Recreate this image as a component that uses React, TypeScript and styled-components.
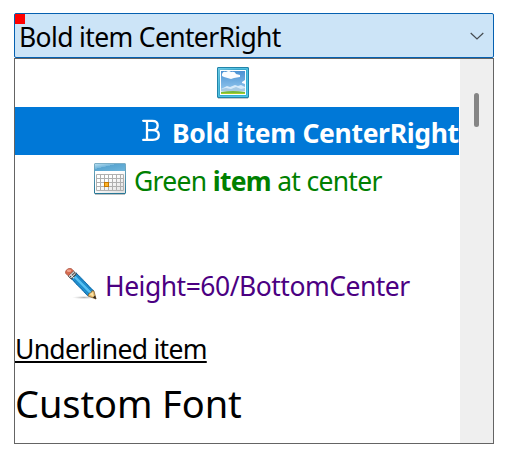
import React from "react";
import styled, { createGlobalStyle } from "styled-components";

const GlobalStyle = createGlobalStyle`
  * { box-sizing: border-box; }
  body { margin: 0; background: #fff; font-family: "Noto Sans", "Open Sans", sans-serif; }
`;

const Page = styled.main`
  width: 514px;
  height: 464px;
  padding: 13px 0 0 14px;
  overflow: hidden;
`;

const Combo = styled.div`
  position: relative;
  display: flex;
  justify-content: space-between;
  width: 480px;
  height: 45px;
  padding: 5px 9px 0 4px;
  border: 1px solid #0560b0;
  border-radius: 2px;
  background: #cce4f7;
`;

const Marker = styled.span`
  position: absolute;
  left: 0;
  top: 0;
  width: 10px;
  height: 10px;
  background: #f00;
`;

const Label = styled.span<{ $spacing: number; $bold?: boolean; $underline?: boolean; $size?: number }>`
  display: block;
  font-size: ${p => p.$size ?? 26.5}px;
  line-height: ${p => (p.$size ? 54 : 36)}px;
  font-weight: ${p => (p.$bold ? 700 : 400)};
  letter-spacing: ${p => p.$spacing}px;
  white-space: pre;
  text-decoration: ${p => (p.$underline ? "underline 2px" : "none")};
  text-underline-offset: 2px;
  text-decoration-skip-ink: none;
`;

const Chevron = styled.svg`
  width: 14px;
  height: 8px;
  margin-top: 13px;
`;

const Dropdown = styled.div`
  display: flex;
  width: 480px;
  height: 386px;
  border: 1px solid #646464;
`;

const Options = styled.div`
  width: 444px;
`;

const Row = styled.div<{ $height?: number; $top?: number; $left?: number; $gap?: number; $selected?: boolean; $color?: string }>`
  display: flex;
  align-items: flex-start;
  gap: ${p => p.$gap ?? 8}px;
  height: ${p => p.$height ?? 48}px;
  padding: ${p => p.$top ?? 8}px 0 0 ${p => p.$left ?? 0}px;
  color: ${p => p.$color ?? "#000"};
  background: ${p => (p.$selected ? "#0078d7" : "transparent")};
`;

const Icon = styled.svg`
  display: block;
  flex: none;
  width: 32px;
  height: 32px;
`;

const Scrollbar = styled.div`
  width: 33px;
  margin-left: 1px;
  padding: 34px 0 0 14px;
  background: #efefef;
`;

const Thumb = styled.div`
  width: 5px;
  height: 34px;
  border-radius: 2.5px;
  background: #858585;
`;

const PictureIcon = () => (
  <Icon viewBox="0 0 32 32">
    <defs>
      <linearGradient id="frame" x2="1" y2="1">
        <stop stopColor="#78bad2" /><stop offset=".35" stopColor="#2992b9" /><stop offset="1" stopColor="#20a8d1" />
      </linearGradient>
      <linearGradient id="sky" x2="0" y2="1">
        <stop stopColor="#4b91d3" /><stop offset="1" stopColor="#9fd0f2" />
      </linearGradient>
    </defs>
    <path d="M1 31.3h30" stroke="#b8bdc0" />
    <rect x=".5" y=".5" width="31" height="30" rx=".5" fill="url(#frame)" stroke="#2184aa" />
    <rect x="1.8" y="1.8" width="28.4" height="27.4" fill="none" stroke="#64d3f0" />
    <path d="M3 3h26v25H3z" fill="#fff" />
    <path d="M4 4h24v23H4z" fill="url(#sky)" />
    <path d="M5 7q1-3 4-2 3-2 5 0 4-1 5 2l4 1v2l-6 1-3 1-7-2-2-1zM25 15l3-2v4l-3-1z" fill="#fbfcff" />
    <path d="M4 22l6-3 3 1 5-2 3 1 3-1 4 2v5H4z" fill="#d7eafa" />
    <path d="M4 22l5-1 5 1 5-2 5 2 4-1v3H4z" fill="#a7cae4" />
    <path d="M4 25q12-2 24 0v2H4z" fill="#77b83b" />
    <path d="M4 26.5h24" stroke="#a9ce28" />
  </Icon>
);

const BoldIcon = () => (
  <Icon viewBox="0 0 32 32">
    <path d="M8.2 5.8h9q5.5 0 5.5 4.6 0 4.7-5.5 4.7H12h5.8q6 0 6 5 0 4.8-6 4.8H8.2M12 5.8v19" fill="none" stroke="#fff" strokeWidth="2.3" strokeLinejoin="round" strokeLinecap="round" />
  </Icon>
);

const CalendarIcon = () => (
  <Icon viewBox="0 0 32 32">
    <defs>
      <linearGradient id="header" x2="1" y2="1">
        <stop stopColor="#b4dcef" /><stop offset=".35" stopColor="#75b7dc" /><stop offset=".36" stopColor="#5aa5d0" /><stop offset="1" stopColor="#6eb5db" />
      </linearGradient>
      <linearGradient id="paper" x1=".6" y1=".4" x2="1" y2="1">
        <stop stopColor="#fff" /><stop offset="1" stopColor="#ddd" />
      </linearGradient>
      <linearGradient id="case" x2="0" y2="1"><stop stopColor="#7caec5" /><stop offset="1" stopColor="#267795" /></linearGradient>
    </defs>
    <path d="M1 31.4h30" stroke="#b7babc" />
    <rect x=".5" y=".5" width="31" height="30" rx=".5" fill="url(#paper)" stroke="url(#case)" />
    <path d="M1 1h30v7H1z" fill="url(#header)" />
    <path d="M2.5 11.5h27v16h-27zM2.5 15.5h27M2.5 19.5h27M2.5 23.5h27M6.5 11v17M10.5 11v17M14.5 11v17M18.5 11v17M22.5 11v17M26.5 11v17" fill="none" stroke="#b0b0b0" />
    <rect x="10.5" y="19.5" width="4" height="4" fill="#fdb52b" stroke="#c87800" />
  </Icon>
);

const PencilIcon = () => (
  <Icon viewBox="0 0 32 32">
    <defs>
      <radialGradient id="shade"><stop stopColor="#777" stopOpacity=".55" /><stop offset="1" stopColor="#aaa" stopOpacity="0" /></radialGradient>
    </defs>
    <ellipse cx="19" cy="29.5" rx="12" ry="1.6" fill="url(#shade)" />
    <path d="M5.2 9.8l5.8-5.4L28.8 22.8l-1.2 2.4-3.2.8-1.2 2.6z" fill="#2195d5" />
    <path d="M5.8 10L23 27.8M11 5L28.5 23" stroke="#12629f" strokeWidth="1.1" strokeDasharray="1.1 .5" />
    <path d="M8.4 7.4l17.8 18" stroke="#55c0f2" strokeWidth="2.4" />
    <path d="M7.2 8.8l17 17.4M9.8 6.2l17.4 17.8" stroke="#166eae" strokeWidth=".7" strokeDasharray="1 .6" />
    <path d="M23 28l1.2-2.8 2-.4.7-2 2.1.2 2 8z" fill="#e8bd6b" stroke="#765223" strokeWidth=".7" />
    <path d="M24.5 26.2l4.5 2.8-1.5-5" fill="#f9e1a7" />
    <path d="M27.7 29.6l2.4-2.2 1.2 3.7z" fill="#30261b" />
    <path d="M3 8l5.5-5.1 3 3.2-5.3 5z" fill="#c9c9c9" stroke="#333" strokeWidth=".7" />
    <path d="M4.6 9.5L10 4.5M6.2 11l5-4.8" stroke="#343434" />
    <path d="M5.7 7l3.4 3.4" stroke="#fff" />
    <path d="M.7 5.6Q-.3 3.6 1.6 1.8 3.6-.1 6.2.5l2.4 2.2L3.2 7.8z" fill="#d46b50" stroke="#a45343" strokeWidth=".6" />
    <ellipse cx="4" cy="2.8" rx="2.2" ry="1.3" fill="#efa38e" />
  </Icon>
);

export default function App() {
  return (
    <Page>
      <GlobalStyle />
      <Combo>
        <Marker />
        <Label $spacing={-0.65}>Bold item CenterRight</Label>
        <Chevron viewBox="0 0 14 8"><path d="M.7 1L7 7l6.3-6" fill="none" stroke="#454b50" strokeWidth="1.2" /></Chevron>
      </Combo>
      <Dropdown>
        <Options>
          <Row $left={202}><PictureIcon /></Row>
          <Row $left={120} $gap={5} $selected $color="#fff">
            <BoldIcon /><Label $spacing={-0.33} $bold>Bold item CenterRight</Label>
          </Row>
          <Row $left={79} $color="#008000">
            <CalendarIcon /><Label $spacing={-0.7}>Green <b>item</b> at center</Label>
          </Row>
          <Row $height={120} $top={65} $left={50} $color="#4b0082">
            <PencilIcon /><Label $spacing={-0.5}>Height=60/BottomCenter</Label>
          </Row>
          <Row><Label $spacing={-0.7} $underline>Underlined item</Label></Row>
          <Row $height={72} $top={5}><Label $size={38} $spacing={-0.1}>Custom Font</Label></Row>
        </Options>
        <Scrollbar><Thumb /></Scrollbar>
      </Dropdown>
    </Page>
  );
}
